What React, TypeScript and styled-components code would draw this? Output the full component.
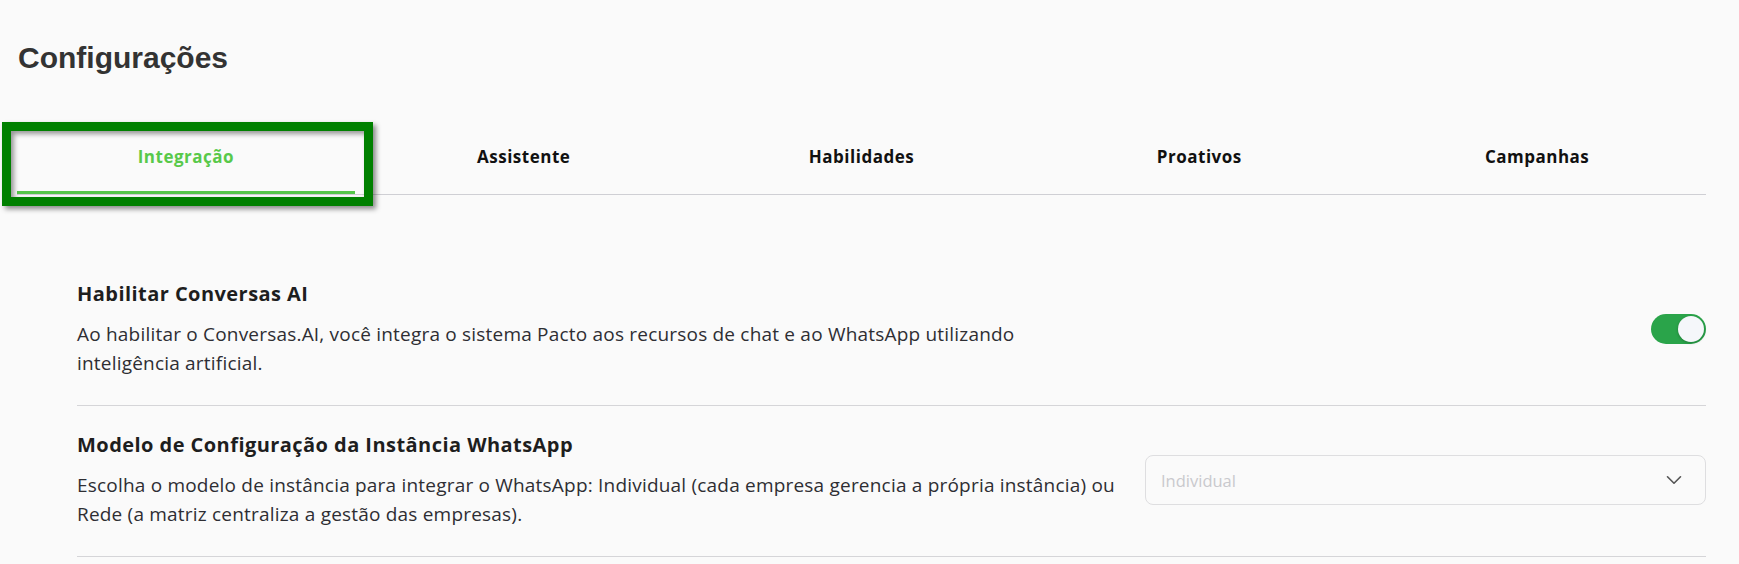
import { ChevronDown } from 'lucide-react';
import { useState } from 'react';
import styled, { createGlobalStyle } from 'styled-components';

const GlobalStyle = createGlobalStyle`
  body {
    margin: 0;
    background: #fafafa;
    font-family: "Open Sans", "Noto Sans", sans-serif;
  }
`;

const Page = styled.div`
  padding: 40px 33px 0 17px;
`;

const Title = styled.h1`
  margin: 0;
  padding-left: 1px;
  font-family: "Liberation Sans", Arial, sans-serif;
  font-size: 30px;
  line-height: 36px;
  font-weight: 700;
  color: #333333;
`;

const TabBar = styled.div`
  display: grid;
  grid-template-columns: repeat(5, 1fr);
  margin-top: 61px;
  border-bottom: 1px solid #cfcfd4;
`;

const Tab = styled.div<{ $active?: boolean }>`
  position: relative;
  padding: 8px 0 22px;
  text-align: center;
  font-size: 17px;
  line-height: 24px;
  letter-spacing: 0.5px;
  font-weight: 700;
  color: ${(p) => (p.$active ? '#58c94a' : '#111111')};
  border-bottom: 3px solid ${(p) => (p.$active ? '#55c64a' : 'transparent')};
  cursor: pointer;
`;

// green highlight frame drawn over the active tab
const Highlight = styled.div`
  position: absolute;
  top: -15px;
  left: -15px;
  right: -18px;
  bottom: -15px;
  border: 9px solid #008000;
  box-shadow: 3px 3px 5px rgba(0, 0, 0, 0.45), inset 3px 3px 5px rgba(0, 0, 0, 0.4);
  pointer-events: none;
`;

const Settings = styled.div`
  margin: 60px 0 0 60px;
`;

const Row = styled.div`
  display: flex;
  align-items: center;
  justify-content: space-between;
  gap: 20px;
  padding: 25px 0 27px;
  border-bottom: 1px solid #d5d5d8;
`;

const TextCol = styled.div<{ $max: number }>`
  max-width: ${(p) => p.$max}px;
`;

const RowTitle = styled.h3`
  margin: 0;
  font-size: 20px;
  line-height: 27px;
  letter-spacing: 0.45px;
  font-weight: 700;
  color: #1e1e1e;
`;

const Desc = styled.p`
  margin: 13px 0 0;
  font-size: 19px;
  line-height: 29px;
  letter-spacing: 0.2px;
  font-weight: 400;
  color: #2e2e33;
`;

const Track = styled.button<{ $on: boolean }>`
  flex-shrink: 0;
  display: flex;
  align-items: center;
  justify-content: ${(p) => (p.$on ? 'flex-end' : 'flex-start')};
  width: 55px;
  height: 30px;
  padding: 0 2px;
  border: none;
  border-radius: 15px;
  background: ${(p) => (p.$on ? '#2aa44a' : '#c9c9c9')};
  cursor: pointer;
`;

const Knob = styled.span`
  width: 26px;
  height: 26px;
  border-radius: 50%;
  background: #f5f7fa;
  box-shadow: 0 1px 3px rgba(0, 0, 0, 0.25);
`;

const Select = styled.div`
  flex-shrink: 0;
  display: flex;
  align-items: center;
  justify-content: space-between;
  box-sizing: border-box;
  width: 561px;
  height: 50px;
  padding: 0 18px 0 15px;
  border: 1px solid #dedee0;
  border-radius: 8px;
  font-size: 16.5px;
  color: #c9c9cd;
  svg {
    color: #555555;
  }
`;

const tabs = ['Integração', 'Assistente', 'Habilidades', 'Proativos', 'Campanhas'];

export default function App() {
  const [enabled, setEnabled] = useState(true);
  const active = 0;

  return (
    <Page>
      <GlobalStyle />
      <Title>Configurações</Title>
      <TabBar>
        {tabs.map((t, i) => (
          <Tab key={t} $active={i === active}>
            {t}
            {i === active && <Highlight />}
          </Tab>
        ))}
      </TabBar>
      <Settings>
        <Row>
          <TextCol $max={1034}>
            <RowTitle>Habilitar Conversas AI</RowTitle>
            <Desc>
              Ao habilitar o Conversas.AI, você integra o sistema Pacto aos recursos de chat e ao WhatsApp utilizando
              inteligência artificial.
            </Desc>
          </TextCol>
          <Track $on={enabled} onClick={() => setEnabled(!enabled)}>
            <Knob />
          </Track>
        </Row>
        <Row>
          <TextCol $max={1048}>
            <RowTitle>Modelo de Configuração da Instância WhatsApp</RowTitle>
            <Desc>
              Escolha o modelo de instância para integrar o WhatsApp: Individual (cada empresa gerencia a própria
              instância) ou Rede (a matriz centraliza a gestão das empresas).
            </Desc>
          </TextCol>
          <Select>
            <span>Individual</span>
            <ChevronDown size={26} strokeWidth={1.5} />
          </Select>
        </Row>
      </Settings>
    </Page>
  );
}
